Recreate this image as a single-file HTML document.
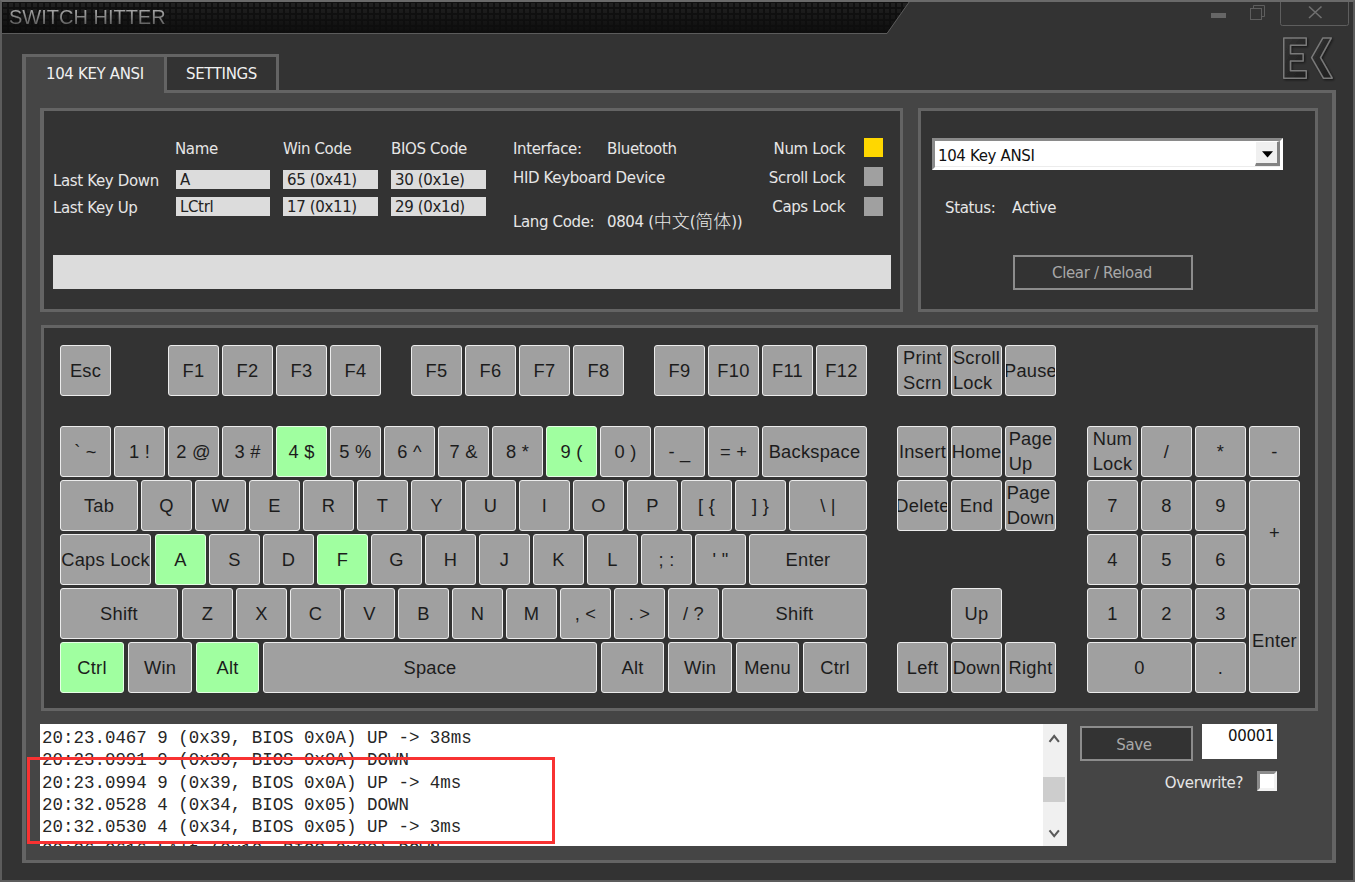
<!DOCTYPE html>
<html lang="en">
<head>
<meta charset="utf-8">
<title>Switch Hitter</title>
<style>
html,body{margin:0;padding:0;}
body{width:1355px;height:882px;overflow:hidden;background:#333;position:relative;font-family:"DejaVu Sans","Liberation Sans","Noto Sans CJK SC",sans-serif;font-size:15px;letter-spacing:-0.36px;color:#e6e6e6;}
.abs,.win *{position:absolute;box-sizing:border-box;}
.win{position:absolute;left:0;top:0;width:1355px;height:882px;box-sizing:border-box;border:2px solid #5c5c5c;border-top-color:#6a6a6a;background:#333;overflow:hidden;}
.win>*{margin:-2px 0 0 -2px;}
.title{letter-spacing:0;left:9px;top:5px;font-family:"Liberation Sans",sans-serif;font-size:20px;line-height:24px;color:transparent;background:linear-gradient(to bottom,#a6a6a6 20%,#5c5c5c 85%);-webkit-background-clip:text;background-clip:text;white-space:pre;}
.t{white-space:pre;line-height:18px;}
.k{width:51px;height:51px;background:#a0a0a0;border:1px solid #ececec;border-radius:3px;color:#1c1c1c;font-family:"Liberation Sans",sans-serif;font-size:18.3px;letter-spacing:0.25px;line-height:25px;display:flex;align-items:center;justify-content:center;text-align:center;overflow:hidden;white-space:nowrap;}
.k span{position:static;display:block;margin-top:-1px;text-align:left;}
.k.g{background:#a0ffa0;border-color:#e6ffe6;}
.fld{background:#dcdcdc;color:#222;height:19px;width:95px;line-height:21px;padding-left:4px;overflow:hidden;white-space:pre;}
.pnl{border:3px solid #646464;background:#333;}
.ll{letter-spacing:0;left:2px;white-space:pre;font-family:"Liberation Mono",monospace;font-size:17.48px;line-height:22px;color:#262626;}
.cj{position:relative;top:1px;font-family:"Noto Sans CJK SC",sans-serif;font-weight:300;font-size:18px;letter-spacing:0;line-height:0;vertical-align:baseline;}
</style>
</head>
<body>
<div class="win">
  <!-- title bar -->
  <svg style="left:0;top:0" width="1355" height="40" viewBox="0 0 1355 40">
    <defs>
      <pattern id="dp" width="6" height="6" patternUnits="userSpaceOnUse" x="3" y="3"><rect x="0" y="0" width="4" height="4" fill="#222"/></pattern>
      <linearGradient id="fade" x1="0" y1="0" x2="0" y2="1"><stop offset="0" stop-color="#0d0d0d" stop-opacity="0"/><stop offset="1" stop-color="#0d0d0d" stop-opacity="1"/></linearGradient>
    </defs>
    <rect x="0" y="0" width="1355" height="40" fill="#333"/>
    <polygon points="2,2 909,2 887,33 2,33" fill="#111"/>
    <polygon points="2,2 909,2 887,33 2,33" fill="url(#dp)"/>
    <polygon points="2,2 909,2 887,33 2,33" fill="url(#fade)"/>
    <polyline points="2,33.5 887,33.5 909.5,1.5" fill="none" stroke="#5c5c5c" stroke-width="1"/>
    <rect x="0" y="0" width="1355" height="2" fill="#6a6a6a"/>
    <!-- window controls -->
    <rect x="1211" y="13" width="15" height="5" fill="#666"/>
    <rect x="1250.5" y="8.5" width="11" height="11" fill="none" stroke="#5e5e5e"/>
    <polyline points="1253.5,8 1253.5,5.5 1264.5,5.5 1264.5,16.5 1262,16.5" fill="none" stroke="#5e5e5e"/>
    <path d="M1280.5,2 V23.5 Q1280.5,25.5 1282.5,25.5 H1346.5 Q1348.5,25.5 1348.5,23.5 V2" fill="none" stroke="#5e5e5e"/>
    <path d="M1309,6.5 L1321.5,18 M1321.5,6.5 L1309,18" stroke="#707070" stroke-width="1.6" fill="none"/>
  </svg>
  <div class="title">SWITCH HITTER</div>
  <!-- EK logo -->
  <svg style="left:1278px;top:34px" width="62" height="52" viewBox="0 0 62 52">
    <defs>
      <linearGradient id="lg" x1="0" y1="0" x2="1" y2="1"><stop offset="0" stop-color="#343434"/><stop offset="1" stop-color="#1e1e1e"/></linearGradient>
      <filter id="ds" x="-20%" y="-20%" width="150%" height="150%"><feDropShadow dx="1.2" dy="1.2" stdDeviation="1" flood-color="#000" flood-opacity=".55"/></filter>
    </defs>
    <g fill="url(#lg)" stroke="#7a7a7a" stroke-width="1.5" stroke-linejoin="round" filter="url(#ds)">
      <path d="M5.75,3.95 H28.25 V11.25 H12.45 V19.75 H25.15 V27.05 H12.45 V36.75 H28.25 V44.15 H5.75 Z"/>
      <path d="M44.9,3.95 H53.3 L42.5,23.6 L54.2,44.15 H45.4 L33.6,23.6 Z"/>
    </g>
  </svg>

  <!-- tab strip + panel -->
  <div style="left:22px;top:90px;width:1314px;height:773px;background:#454545;border:3px solid #646464;border-left-width:4px;border-right-width:4px"></div>
  <div style="left:22px;top:54px;width:257px;height:39px;background:#333;border:3px solid #646464;border-left-width:4px"></div>
  <div style="left:26px;top:57px;width:138px;height:40px;background:#454545"></div>
  <div style="left:164px;top:57px;width:3px;height:36px;background:#646464"></div>
  <div class="t" style="left:46px;top:65px;color:#f0f0f0">104 KEY ANSI</div>
  <div class="t" style="left:186px;top:65px;color:#f0f0f0">SETTINGS</div>

  <!-- info panel -->
  <div class="pnl" style="left:40px;top:108px;width:863px;height:204px;border-left-width:4px"></div>
  <div class="t" style="left:175px;top:140px">Name</div>
  <div class="t" style="left:283px;top:140px">Win Code</div>
  <div class="t" style="left:391px;top:140px">BIOS Code</div>
  <div class="t" style="left:53px;top:172px">Last Key Down</div>
  <div class="t" style="left:53px;top:199px">Last Key Up</div>
  <div class="fld" style="left:176px;top:170px;width:94px">A</div>
  <div class="fld" style="left:283px;top:170px">65 (0x41)</div>
  <div class="fld" style="left:391px;top:170px">30 (0x1e)</div>
  <div class="fld" style="left:176px;top:197px;width:94px">LCtrl</div>
  <div class="fld" style="left:283px;top:197px">17 (0x11)</div>
  <div class="fld" style="left:391px;top:197px">29 (0x1d)</div>
  <div class="t" style="left:513px;top:140px">Interface:</div>
  <div class="t" style="left:607px;top:140px">Bluetooth</div>
  <div class="t" style="left:513px;top:169px">HID Keyboard Device</div>
  <div class="t" style="left:513px;top:213px">Lang Code:</div>
  <div class="t" style="left:607px;top:213px">0804 (<span class="cj">中文</span>(<span class="cj">简体</span>))</div>
  <div class="t" style="left:700px;top:140px;width:145px;text-align:right">Num Lock</div>
  <div class="t" style="left:700px;top:169px;width:145px;text-align:right">Scroll Lock</div>
  <div class="t" style="left:700px;top:198px;width:145px;text-align:right">Caps Lock</div>
  <div style="left:864px;top:138px;width:19px;height:19px;background:#ffd700"></div>
  <div style="left:864px;top:167px;width:19px;height:19px;background:#a0a0a0"></div>
  <div style="left:864px;top:197px;width:19px;height:19px;background:#a0a0a0"></div>
  <div style="left:53px;top:255px;width:838px;height:34px;background:#dcdcdc"></div>

  <!-- right panel -->
  <div class="pnl" style="left:918px;top:108px;width:400px;height:204px"></div>
  <div style="left:932px;top:138px;width:351px;height:32px;background:#fff;border:3px solid;border-color:#8a8a8a #fff #fff #8a8a8a;box-shadow:inset 0 -1px 0 #ececec"></div>
  <div class="t" style="left:938px;top:147px;color:#111">104 Key ANSI</div>
  <div style="left:1255px;top:141px;width:25px;height:25px;background:#f0f0f0;border:solid;border-width:1px 3px 3px 1px;border-color:#fff #828282 #828282 #fff"></div>
  <svg style="left:1261px;top:151px" width="13" height="8" viewBox="0 0 13 8"><polygon points="1,0.3 12,0.3 6.5,6.5" fill="#000"/></svg>
  <div class="t" style="left:945px;top:199px">Status:</div>
  <div class="t" style="left:1012px;top:199px">Active</div>
  <div class="t" style="left:1013px;top:255px;width:180px;height:35px;border:2px solid #8c8c8c;background:#333;color:#a8a8a8;text-align:center;line-height:33px;padding-right:2px">Clear / Reload</div>

  <!-- keyboard panel -->
  <div class="pnl" style="left:41px;top:325px;width:1277px;height:386px"></div>
<div class="k" style="left:60px;top:345px"><span>Esc</span></div>
<div class="k" style="left:168px;top:345px"><span>F1</span></div>
<div class="k" style="left:222px;top:345px"><span>F2</span></div>
<div class="k" style="left:276px;top:345px"><span>F3</span></div>
<div class="k" style="left:330px;top:345px"><span>F4</span></div>
<div class="k" style="left:411px;top:345px"><span>F5</span></div>
<div class="k" style="left:465px;top:345px"><span>F6</span></div>
<div class="k" style="left:519px;top:345px"><span>F7</span></div>
<div class="k" style="left:573px;top:345px"><span>F8</span></div>
<div class="k" style="left:654px;top:345px"><span>F9</span></div>
<div class="k" style="left:708px;top:345px"><span>F10</span></div>
<div class="k" style="left:762px;top:345px"><span>F11</span></div>
<div class="k" style="left:816px;top:345px"><span>F12</span></div>
<div class="k" style="left:897px;top:345px"><span>Print<br>Scrn</span></div>
<div class="k" style="left:951px;top:345px"><span>Scroll<br>Lock</span></div>
<div class="k" style="left:1005px;top:345px"><span>Pause</span></div>
<div class="k" style="left:60px;top:426px"><span>` ~</span></div>
<div class="k" style="left:114px;top:426px"><span>1 !</span></div>
<div class="k" style="left:168px;top:426px"><span>2 @</span></div>
<div class="k" style="left:222px;top:426px"><span>3 #</span></div>
<div class="k g" style="left:276px;top:426px"><span>4 $</span></div>
<div class="k" style="left:330px;top:426px"><span>5 %</span></div>
<div class="k" style="left:384px;top:426px"><span>6 ^</span></div>
<div class="k" style="left:438px;top:426px"><span>7 &amp;</span></div>
<div class="k" style="left:492px;top:426px"><span>8 *</span></div>
<div class="k g" style="left:546px;top:426px"><span>9 (</span></div>
<div class="k" style="left:600px;top:426px"><span>0 )</span></div>
<div class="k" style="left:654px;top:426px"><span>- _</span></div>
<div class="k" style="left:708px;top:426px"><span>= +</span></div>
<div class="k" style="left:762px;top:426px;width:105px"><span>Backspace</span></div>
<div class="k" style="left:897px;top:426px"><span>Insert</span></div>
<div class="k" style="left:951px;top:426px"><span>Home</span></div>
<div class="k" style="left:1005px;top:426px"><span>Page<br>Up</span></div>
<div class="k" style="left:1087px;top:426px"><span>Num<br>Lock</span></div>
<div class="k" style="left:1141px;top:426px"><span>/</span></div>
<div class="k" style="left:1195px;top:426px"><span>*</span></div>
<div class="k" style="left:1249px;top:426px"><span>-</span></div>
<div class="k" style="left:60px;top:480px;width:78px"><span>Tab</span></div>
<div class="k" style="left:141px;top:480px"><span>Q</span></div>
<div class="k" style="left:195px;top:480px"><span>W</span></div>
<div class="k" style="left:249px;top:480px"><span>E</span></div>
<div class="k" style="left:303px;top:480px"><span>R</span></div>
<div class="k" style="left:357px;top:480px"><span>T</span></div>
<div class="k" style="left:411px;top:480px"><span>Y</span></div>
<div class="k" style="left:465px;top:480px"><span>U</span></div>
<div class="k" style="left:519px;top:480px"><span>I</span></div>
<div class="k" style="left:573px;top:480px"><span>O</span></div>
<div class="k" style="left:627px;top:480px"><span>P</span></div>
<div class="k" style="left:681px;top:480px"><span>[ {</span></div>
<div class="k" style="left:735px;top:480px"><span>] }</span></div>
<div class="k" style="left:789px;top:480px;width:78px"><span>\ |</span></div>
<div class="k" style="left:897px;top:480px"><span>Delete</span></div>
<div class="k" style="left:951px;top:480px"><span>End</span></div>
<div class="k" style="left:1005px;top:480px"><span>Page<br>Down</span></div>
<div class="k" style="left:1087px;top:480px"><span>7</span></div>
<div class="k" style="left:1141px;top:480px"><span>8</span></div>
<div class="k" style="left:1195px;top:480px"><span>9</span></div>
<div class="k" style="left:1249px;top:480px;height:105px"><span>+</span></div>
<div class="k" style="left:60px;top:534px;width:91px"><span>Caps Lock</span></div>
<div class="k g" style="left:155px;top:534px"><span>A</span></div>
<div class="k" style="left:209px;top:534px"><span>S</span></div>
<div class="k" style="left:263px;top:534px"><span>D</span></div>
<div class="k g" style="left:317px;top:534px"><span>F</span></div>
<div class="k" style="left:371px;top:534px"><span>G</span></div>
<div class="k" style="left:425px;top:534px"><span>H</span></div>
<div class="k" style="left:479px;top:534px"><span>J</span></div>
<div class="k" style="left:533px;top:534px"><span>K</span></div>
<div class="k" style="left:587px;top:534px"><span>L</span></div>
<div class="k" style="left:641px;top:534px"><span>; :</span></div>
<div class="k" style="left:695px;top:534px"><span>' &quot;</span></div>
<div class="k" style="left:749px;top:534px;width:118px"><span>Enter</span></div>
<div class="k" style="left:1087px;top:534px"><span>4</span></div>
<div class="k" style="left:1141px;top:534px"><span>5</span></div>
<div class="k" style="left:1195px;top:534px"><span>6</span></div>
<div class="k" style="left:60px;top:588px;width:118px"><span>Shift</span></div>
<div class="k" style="left:182px;top:588px"><span>Z</span></div>
<div class="k" style="left:236px;top:588px"><span>X</span></div>
<div class="k" style="left:290px;top:588px"><span>C</span></div>
<div class="k" style="left:344px;top:588px"><span>V</span></div>
<div class="k" style="left:398px;top:588px"><span>B</span></div>
<div class="k" style="left:452px;top:588px"><span>N</span></div>
<div class="k" style="left:506px;top:588px"><span>M</span></div>
<div class="k" style="left:560px;top:588px"><span>, &lt;</span></div>
<div class="k" style="left:614px;top:588px"><span>. &gt;</span></div>
<div class="k" style="left:668px;top:588px"><span>/ ?</span></div>
<div class="k" style="left:722px;top:588px;width:145px"><span>Shift</span></div>
<div class="k" style="left:951px;top:588px"><span>Up</span></div>
<div class="k" style="left:1087px;top:588px"><span>1</span></div>
<div class="k" style="left:1141px;top:588px"><span>2</span></div>
<div class="k" style="left:1195px;top:588px"><span>3</span></div>
<div class="k" style="left:1249px;top:588px;height:105px"><span>Enter</span></div>
<div class="k g" style="left:60px;top:642px;width:64px"><span>Ctrl</span></div>
<div class="k" style="left:128px;top:642px;width:64px"><span>Win</span></div>
<div class="k g" style="left:196px;top:642px;width:63px"><span>Alt</span></div>
<div class="k" style="left:263px;top:642px;width:334px"><span>Space</span></div>
<div class="k" style="left:601px;top:642px;width:63px"><span>Alt</span></div>
<div class="k" style="left:668px;top:642px;width:64px"><span>Win</span></div>
<div class="k" style="left:736px;top:642px;width:63px"><span>Menu</span></div>
<div class="k" style="left:803px;top:642px;width:64px"><span>Ctrl</span></div>
<div class="k" style="left:897px;top:642px"><span>Left</span></div>
<div class="k" style="left:951px;top:642px"><span>Down</span></div>
<div class="k" style="left:1005px;top:642px"><span>Right</span></div>
<div class="k" style="left:1087px;top:642px;width:105px"><span>0</span></div>
<div class="k" style="left:1195px;top:642px"><span>.</span></div>

  <!-- log -->
  <div style="left:40px;top:724px;width:1027px;height:122px;background:#fff;overflow:hidden">
<div class="ll" style="top:3.2px">20:23.0467 9 (0x39, BIOS 0x0A) UP -&gt; 38ms</div>
<div class="ll" style="top:25.47px">20:23.0991 9 (0x39, BIOS 0x0A) DOWN</div>
<div class="ll" style="top:47.74px">20:23.0994 9 (0x39, BIOS 0x0A) UP -&gt; 4ms</div>
<div class="ll" style="top:70.01px">20:32.0528 4 (0x34, BIOS 0x05) DOWN</div>
<div class="ll" style="top:92.28px">20:32.0530 4 (0x34, BIOS 0x05) UP -&gt; 3ms</div>
<div class="ll" style="top:114.55px">20:36.0616 LAlt (0x12, BIOS 0x38) DOWN</div>
    <div style="left:1003px;top:0;width:24px;height:122px;background:#f0f0f0"></div>
    <div style="left:1003px;top:53px;width:22px;height:25px;background:#cdcdcd"></div>
    <svg style="left:1003px;top:0" width="24" height="122" viewBox="0 0 24 122"><path d="M6.5,17.8 L11.2,12 L15.9,17.8 M6.5,106.3 L11.2,112.1 L15.9,106.3" fill="none" stroke="#5a5a5a" stroke-width="2.1"/></svg>
  </div>
  <div style="left:27px;top:757px;width:528px;height:87px;border:3px solid #f83232"></div>

  <!-- save -->
  <div class="t" style="left:1080px;top:726px;width:113px;height:35px;border:2px solid #8c8c8c;background:#333;color:#a8a8a8;text-align:center;line-height:34px;padding-right:5px">Save</div>
  <div class="t" style="left:1202px;top:724px;width:75px;height:35px;background:#fff;color:#111;text-align:right;padding:3px 3px 0 0">00001</div>
  <div class="t" style="left:1100px;top:774px;width:143px;text-align:right">Overwrite?</div>
  <div style="left:1257px;top:771px;width:20px;height:20px;background:#fff;border:3px solid;border-color:#8c8c8c #f2f2f2 #f2f2f2 #8c8c8c"></div>
</div>
</body>
</html>
